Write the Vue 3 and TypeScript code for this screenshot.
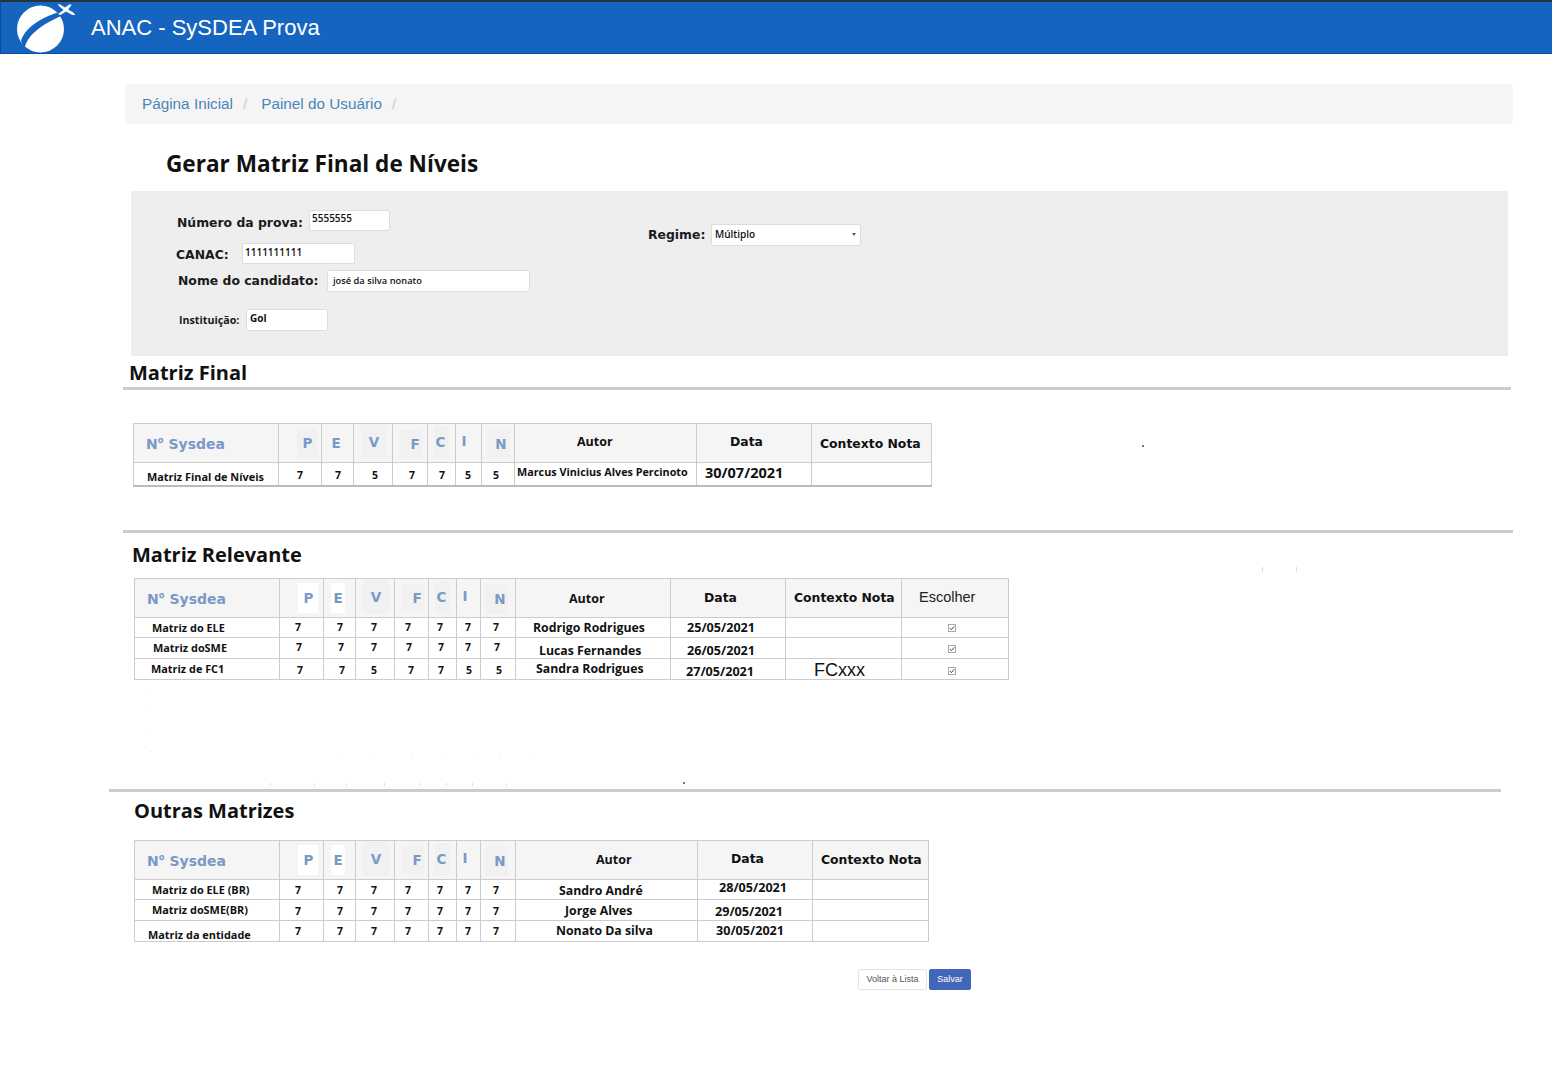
<template>
  <div class="page">
    <header class="topbar">
      <svg class="logo" viewBox="0 0 64 54" width="64" height="54">
        <circle cx="40.500" cy="29" r="23.500" fill="#fff" />
        <path d="M58 12.500 C40 18 25 28 21 41 L24.500 49 C27 35 41 25 61 16 Z" fill="#1565c0" />
        <path d="M57.500 4 L60 4.500 L65 7.500 L74 13 L75 15 L72.500 15 L64 10.500 L59.500 6.500 Z" fill="#fff" />
        <path d="M70 4 L71.500 5 L67.500 10.500 L60.500 15 L58 14 L63 10.500 L65 7.500 Z" fill="#fff" />
      </svg>
      <span class="brand">ANAC - SySDEA Prova</span>
    </header>

    <main class="content">
      <nav class="crumbs">
        <a>Página Inicial</a><span class="sep">/</span>
        <a>Painel do Usuário</a><span class="sep">/</span>
      </nav>

      <h1 class="title">Gerar Matriz Final de Níveis</h1>

      <section class="panel">
        <div class="panel-left">
          <div class="field-row row-prova">
            <label>Número da prova:</label>
            <span class="field w-prova">5555555</span>
          </div>
          <div class="field-row row-canac">
            <label>CANAC:</label>
            <span class="field w-canac">1111111111</span>
          </div>
          <div class="field-row row-nome">
            <label>Nome do candidato:</label>
            <span class="field w-nome">josé da silva nonato</span>
          </div>
          <div class="field-row row-inst">
            <label>Instituição:</label>
            <span class="field w-inst">Gol</span>
          </div>
        </div>
        <div class="field-row row-regime">
          <label>Regime:</label>
          <span class="field w-regime">Múltiplo<i class="caret"></i></span>
        </div>
      </section>

      <template v-for="block in blocks" :key="block.title">
        <div :class="['block-head', block.kind]">
          <hr v-if="block.kind !== 'final'" class="rule" />
          <h2>{{ block.title }}</h2>
          <hr v-if="block.kind === 'final'" class="rule" />
        </div>
        <table :class="['matrix', block.kind]">
          <colgroup>
            <col v-for="(w, i) in block.cols" :key="i" :style="{ width: w + 'px' }" />
          </colgroup>
          <thead>
            <tr>
              <th class="sysdea">N<span class="ord">º</span> Sysdea</th>
              <th v-for="l in block.letters" :key="l.t" class="letter">
                <span :class="['chip', l.tone]" :style="chipStyle(l)">{{ l.t }}</span>
              </th>
              <th v-for="h in block.heads" :key="h.t" :class="h.cls" :style="{ paddingLeft: h.x + 'px' }">{{ h.t }}</th>
            </tr>
          </thead>
          <tbody>
            <tr v-for="(row, r) in block.rows" :key="r" :style="{ height: row.h + 'px' }">
              <td v-for="(cell, c) in row.cells" :key="c" :class="cell.cls" :style="{ paddingLeft: cell.x + 'px', paddingTop: cell.y + 'px' }">
                <svg v-if="cell.check" class="tick" viewBox="0 0 8 8" width="8" height="8">
                  <rect x="0.500" y="0.500" width="7" height="7" fill="#fff" stroke="#aaa" />
                  <path d="M1.800 4 L3.400 5.600 L6.300 2.300" fill="none" stroke="#444" />
                </svg>
                <template v-else>{{ cell.t }}</template>
              </td>
            </tr>
          </tbody>
        </table>
      </template>

      <div class="actions">
        <button class="btn">Voltar à Lista</button>
        <button class="btn primary">Salvar</button>
      </div>
    </main>

    <i v-for="(s, i) in specks" :key="i" :class="['speck', s[3] ? 'dark' : '']" :style="{ left: s[0] + 'px', top: s[1] + 'px', height: s[2] + 'px' }"></i>
  </div>
</template>

<script setup lang="ts">
interface Letter { t: string; w: number; h: number; dy: number; dx: number; pl: number; pr: number; tone: string }
interface Cell { t: string; x: number; y: number; cls: string; check?: boolean }
interface Row { h: number; cells: Cell[] }

// esquerda de cada coluna, igual nas tres tabelas exceto o fim
const lefts1 = [134, 279, 322, 354, 393, 428, 456, 482, 515, 697, 812]
const lefts2 = [135, 280, 324, 356, 395, 429, 457, 481, 516, 671, 786, 902]
const lefts3 = [135, 280, 324, 356, 395, 429, 457, 481, 516, 698, 813]

const widths = (lefts: number[], end: number) => lefts.map((l, i) => (lefts[i + 1] ?? end) - l)

const letters = (boxes: string[]): Letter[] => [
  { t: 'P', w: 20, h: 30, dy: 0, dx: 18, pl: 1, pr: 0, tone: boxes[0] },
  { t: 'E', w: 14, h: 30, dy: 0, dx: 7, pl: 0, pr: 0, tone: boxes[1] },
  { t: 'V', w: 26, h: 34, dy: -2, dx: 7, pl: 0, pr: 0, tone: 'grey' },
  { t: 'F', w: 23, h: 28, dy: 1, dx: 6, pl: 9, pr: 0, tone: 'grey' },
  { t: 'C', w: 15, h: 32, dy: -2, dx: 6, pl: 0, pr: 2, tone: 'grey' },
  { t: 'I', w: 14, h: 22, dy: -4, dx: 5, pl: 0, pr: 8, tone: 'plain' },
  { t: 'N', w: 22, h: 30, dy: 2, dx: 5, pl: 6, pr: 0, tone: 'grey' }
]

const chipStyle = (l: Letter) => ({
  width: l.w + 'px',
  height: l.h + 'px',
  lineHeight: l.h + 'px',
  marginLeft: l.dx + 'px',
  marginTop: l.dy + 'px',
  paddingLeft: l.pl + 'px',
  paddingRight: l.pr + 'px'
})

// x e y sao a posicao do texto na tela; vira padding dentro da celula
const makeRow = (
  lefts: number[],
  top: number,
  h: number,
  items: [string, number, number, string][]
): Row => ({
  h,
  cells: items.map(([t, x, y, cls], i) => ({
    t,
    x: x ? x - lefts[i] : 0,
    y: y ? y - top - 6 : 0,
    cls,
    check: cls === 'check'
  }))
})

const scores = (vals: string, xs: number[], y: number): [string, number, number, string][] =>
  vals.split('').map((v, i) => [v, xs[i] - 3, y, 'num'])

const rowA = [298, 340, 374, 408, 440, 468, 496]

const blocks = [
  {
    title: 'Matriz Final',
    kind: 'final',
    cols: widths(lefts1, 932),
    letters: letters(['grey', 'plain']),
    heads: [
      { t: 'Autor', x: 62, cls: 'head slim up2' },
      { t: 'Data', x: 33, cls: 'head up2' },
      { t: 'Contexto Nota', x: 8, cls: 'head' }
    ],
    rows: [
      makeRow(lefts1, 462, 23, [
        ['Matriz Final de Níveis', 147, 477, 'name'],
        ...scores('7757755', [300, 338, 375, 412, 442, 468, 496], 475),
        ['Marcus Vinicius Alves Percinoto', 517, 472, 'author small'],
        ['30/07/2021', 705, 473, 'date big'],
        ['', 0, 0, 'blank']
      ])
    ]
  },
  {
    title: 'Matriz Relevante',
    kind: 'relevante',
    cols: widths(lefts2, 1009),
    letters: letters(['white', 'white']),
    heads: [
      { t: 'Autor', x: 53, cls: 'head slim down' },
      { t: 'Data', x: 33, cls: 'head' },
      { t: 'Contexto Nota', x: 8, cls: 'head' },
      { t: 'Escolher', x: 17, cls: 'head light up' }
    ],
    rows: [
      makeRow(lefts2, 617, 20, [
        ['Matriz do ELE', 152, 628, 'name'],
        ...scores('7777777', rowA, 627),
        ['Rodrigo Rodrigues', 533, 628, 'author'],
        ['25/05/2021', 687, 628, 'date'],
        ['', 0, 0, 'blank'],
        ['', 948, 629, 'check']
      ]),
      makeRow(lefts2, 637, 21, [
        ['Matriz doSME', 153, 648, 'name'],
        ...scores('7777777', [299, 341, 374, 409, 441, 468, 497], 647),
        ['Lucas Fernandes', 539, 651, 'author'],
        ['26/05/2021', 687, 651, 'date'],
        ['', 0, 0, 'blank'],
        ['', 948, 650, 'check']
      ]),
      makeRow(lefts2, 658, 21, [
        ['Matriz de FC1', 151, 669, 'name'],
        ...scores('7757755', [300, 342, 374, 411, 441, 469, 499], 670),
        ['Sandra Rodrigues', 536, 669, 'author'],
        ['27/05/2021', 686, 672, 'date'],
        ['FCxxx', 814, 670, 'note'],
        ['', 948, 672, 'check']
      ])
    ]
  },
  {
    title: 'Outras Matrizes',
    kind: 'outras',
    cols: widths(lefts3, 929),
    letters: letters(['white', 'white']),
    heads: [
      { t: 'Autor', x: 80, cls: 'head slim' },
      { t: 'Data', x: 33, cls: 'head up' },
      { t: 'Contexto Nota', x: 8, cls: 'head' }
    ],
    rows: [
      makeRow(lefts3, 879, 20, [
        ['Matriz do ELE (BR)', 152, 890, 'name'],
        ...scores('7777777', rowA, 890),
        ['Sandro André', 559, 891, 'author'],
        ['28/05/2021', 719, 888, 'date'],
        ['', 0, 0, 'blank']
      ]),
      makeRow(lefts3, 899, 21, [
        ['Matriz doSME(BR)', 152, 910, 'name'],
        ...scores('7777777', rowA, 911),
        ['Jorge Alves', 565, 911, 'author'],
        ['29/05/2021', 715, 912, 'date'],
        ['', 0, 0, 'blank']
      ]),
      makeRow(lefts3, 920, 21, [
        ['Matriz da entidade', 148, 935, 'name'],
        ...scores('7777777', rowA, 931),
        ['Nonato Da silva', 556, 931, 'author'],
        ['30/05/2021', 716, 931, 'date'],
        ['', 0, 0, 'blank']
      ])
    ]
  }
]

// sujeira que existe no print original: [x, y, altura, escuro]
const specks: number[][] = [
  [1142, 445, 2, 1],
  [683, 782, 2, 1],
  [1262, 567, 5, 0],
  [1296, 567, 5, 0],
  ...[689, 709, 730, 751].map((y) => [150, y, 1, 0]),
  ...[341, 373, 411, 446, 473, 499, 533].map((x) => [x, 753, 1, 0]),
  ...[270, 314, 346, 384, 419, 446, 472, 506].map((x) => [x, 783, 3, 0])
]
</script>

<style>
html,
body {
  margin: 0;
  background: #fff;
}
</style>

<style scoped>
.page {
  position: relative;
  width: 1552px;
  height: 1070px;
  overflow: hidden;
  font-family: "Open Sans", "Noto Sans", sans-serif;
  color: #111;
}

.topbar {
  box-sizing: border-box;
  height: 54px;
  display: flex;
  align-items: center;
  background: #1565c0;
  border-top: 2px solid #2b3138;
  border-left: 1px solid #0f4c99;
  border-bottom: 1px solid #0f4c99;
}

.logo {
  flex: none;
  margin-top: -2px;
  margin-left: -1px;
  overflow: visible;
}

.brand {
  margin-left: 27px;
  font-family: "Liberation Sans", Arial, sans-serif;
  font-size: 22px;
  color: #fff;
}

.content {
  display: flex;
  flex-direction: column;
  align-items: flex-start;
}

.crumbs {
  box-sizing: border-box;
  margin: 30px 0 0 125px;
  width: 1388px;
  height: 40px;
  padding: 0 17px;
  display: flex;
  align-items: center;
  background: #f5f5f5;
  border-radius: 4px;
  font-family: "Liberation Sans", Arial, sans-serif;
  font-size: 15.300px;
}

.crumbs a {
  color: #4a86b8;
}

.sep {
  margin: 0 14px 0 10px;
  color: #ccc;
}

.title {
  margin: 25px 0 12px 166px;
  font-size: 22.600px;
  line-height: 30px;
  font-weight: 700;
  color: #111;
}

.panel {
  box-sizing: border-box;
  margin-left: 131px;
  width: 1377px;
  height: 165px;
  padding-top: 19px;
  display: flex;
  background: #eee;
}

.panel-left {
  width: 517px;
  flex: none;
}

.field-row {
  display: flex;
  align-items: center;
}

.field-row label {
  font-family: "DejaVu Sans", sans-serif;
  font-size: 12.400px;
  font-weight: 700;
  color: #1a1a1a;
}

.field {
  box-sizing: border-box;
  display: block;
  flex: none;
  background: #fff;
  border: 1px solid #ddd;
  border-radius: 2px;
  font-size: 10px;
  line-height: 14px;
  color: #111;
}

.row-prova {
  margin-left: 46px;
  height: 21px;
}

.row-prova label {
  width: 132px;
  flex: none;
  padding-top: 4px;
}

.w-prova {
  width: 81px;
  height: 21px;
  padding: 0 2px;
  font-weight: 600;
}

.row-canac {
  margin: 12px 0 0 45px;
  height: 21px;
}

.row-canac label {
  width: 66px;
  flex: none;
  padding-top: 2px;
}

.w-canac {
  width: 113px;
  height: 21px;
  padding: 1px 2px;
  font-weight: 600;
}

.row-nome {
  margin: 6px 0 0 47px;
  height: 22px;
}

.row-nome label {
  width: 149px;
  flex: none;
  padding-bottom: 2px;
}

.w-nome {
  width: 203px;
  height: 22px;
  padding: 3px 5px;
  font-size: 9.300px;
  font-weight: 600;
}

.row-inst {
  margin: 17px 0 0 48px;
  height: 22px;
}

.row-inst label {
  width: 67px;
  flex: none;
  font-family: "Open Sans", sans-serif;
  font-size: 10.700px;
}

.w-inst {
  width: 82px;
  height: 22px;
  padding: 1px 3px;
  font-weight: 700;
}

.row-regime {
  margin: 14px 0 0 0;
  height: 22px;
}

.row-regime label {
  width: 63px;
  flex: none;
  padding-bottom: 2px;
}

.w-regime {
  position: relative;
  width: 150px;
  height: 22px;
  padding: 2px 3px;
  font-weight: 600;
}

.caret {
  position: absolute;
  right: 4px;
  top: 8px;
  border: 2.500px solid transparent;
  border-top: 3px solid #555;
}

.block-head {
  width: 1552px;
}

.block-head h2 {
  margin: 0;
  font-size: 20px;
  line-height: 24px;
  font-weight: 700;
  color: #111;
}

.rule {
  margin: 0;
  height: 3px;
  border: 0;
  background: #ccc;
}

.block-head.final h2 {
  margin: 5px 0 2px 129px;
}

.block-head.final .rule {
  margin-left: 123px;
  width: 1388px;
}

.block-head.relevante {
  margin-top: 43px;
}

.block-head.relevante .rule {
  margin-left: 123px;
  width: 1390px;
}

.block-head.relevante h2 {
  margin: 10px 0 11px 132px;
}

.block-head.outras {
  margin-top: 109px;
}

.block-head.outras .rule {
  margin-left: 109px;
  width: 1392px;
}

.block-head.outras h2 {
  margin: 7px 0 17px 134px;
}

.matrix {
  table-layout: fixed;
  border-collapse: collapse;
  margin-left: 134px;
}

.matrix.final {
  margin-top: 33px;
  margin-left: 133px;
  border-bottom: 2px solid #bbb;
}

.matrix th,
.matrix td {
  box-sizing: border-box;
  border: 1px solid #ccc;
  padding: 0;
  text-align: left;
  white-space: nowrap;
}

.matrix th {
  height: 39px;
  background: #f5f5f5;
  vertical-align: middle;
}

.matrix td {
  vertical-align: top;
  line-height: 10px;
  font-weight: 700;
}

.sysdea {
  padding-left: 12px !important;
  font-family: "DejaVu Sans", sans-serif;
  font-size: 14px;
  font-weight: 700;
  color: #7b98c6;
}

.ord {
  font-family: "Open Sans", sans-serif;
  font-size: 15px;
}

.letter {
  font-family: "DejaVu Sans", sans-serif;
  font-size: 13.500px;
  font-weight: 700;
  color: #7b98c6;
}

.chip {
  display: block;
  box-sizing: border-box;
  text-align: center;
}

.chip.grey {
  background: #f1f1f1;
}

.chip.white {
  background: #fff;
}

.head {
  font-family: "DejaVu Sans", sans-serif;
  font-size: 12.400px;
  font-weight: 700;
  color: #111;
}

.head.slim {
  font-family: "Open Sans", sans-serif;
  font-size: 12.500px;
}

.head.up {
  padding-bottom: 2px !important;
}

.head.up2 {
  padding-bottom: 4px !important;
}

.head.down {
  padding-top: 2px !important;
}

.head.light {
  font-family: "Liberation Sans", Arial, sans-serif;
  font-size: 14.500px;
  font-weight: 400;
  color: #222;
}

.name {
  font-size: 10.900px;
}

.num {
  font-size: 10.500px;
}

.author {
  font-size: 12.300px;
}

.author.small {
  font-size: 10.800px;
}

.date {
  font-size: 12.600px;
}

.date.big {
  font-size: 14.500px;
}

.matrix td.note {
  font-family: "Liberation Sans", Arial, sans-serif;
  font-size: 18px;
  font-weight: 400;
}

.tick {
  display: block;
}

.actions {
  display: flex;
  gap: 2px;
  margin: 27px 0 0 858px;
}

.btn {
  box-sizing: border-box;
  height: 21px;
  padding: 0;
  border: 1px solid #e4e4e4;
  border-radius: 2px;
  background: #fff;
  font-family: "Liberation Sans", Arial, sans-serif;
  font-size: 9px;
  color: #555;
  width: 69px;
}

.btn.primary {
  width: 42px;
  border-color: #4266b8;
  background: #4266b8;
  color: #fff;
}

.speck {
  position: absolute;
  width: 1px;
  background: #ddd;
}

.speck.dark {
  width: 2px;
  background: #777;
}
</style>
